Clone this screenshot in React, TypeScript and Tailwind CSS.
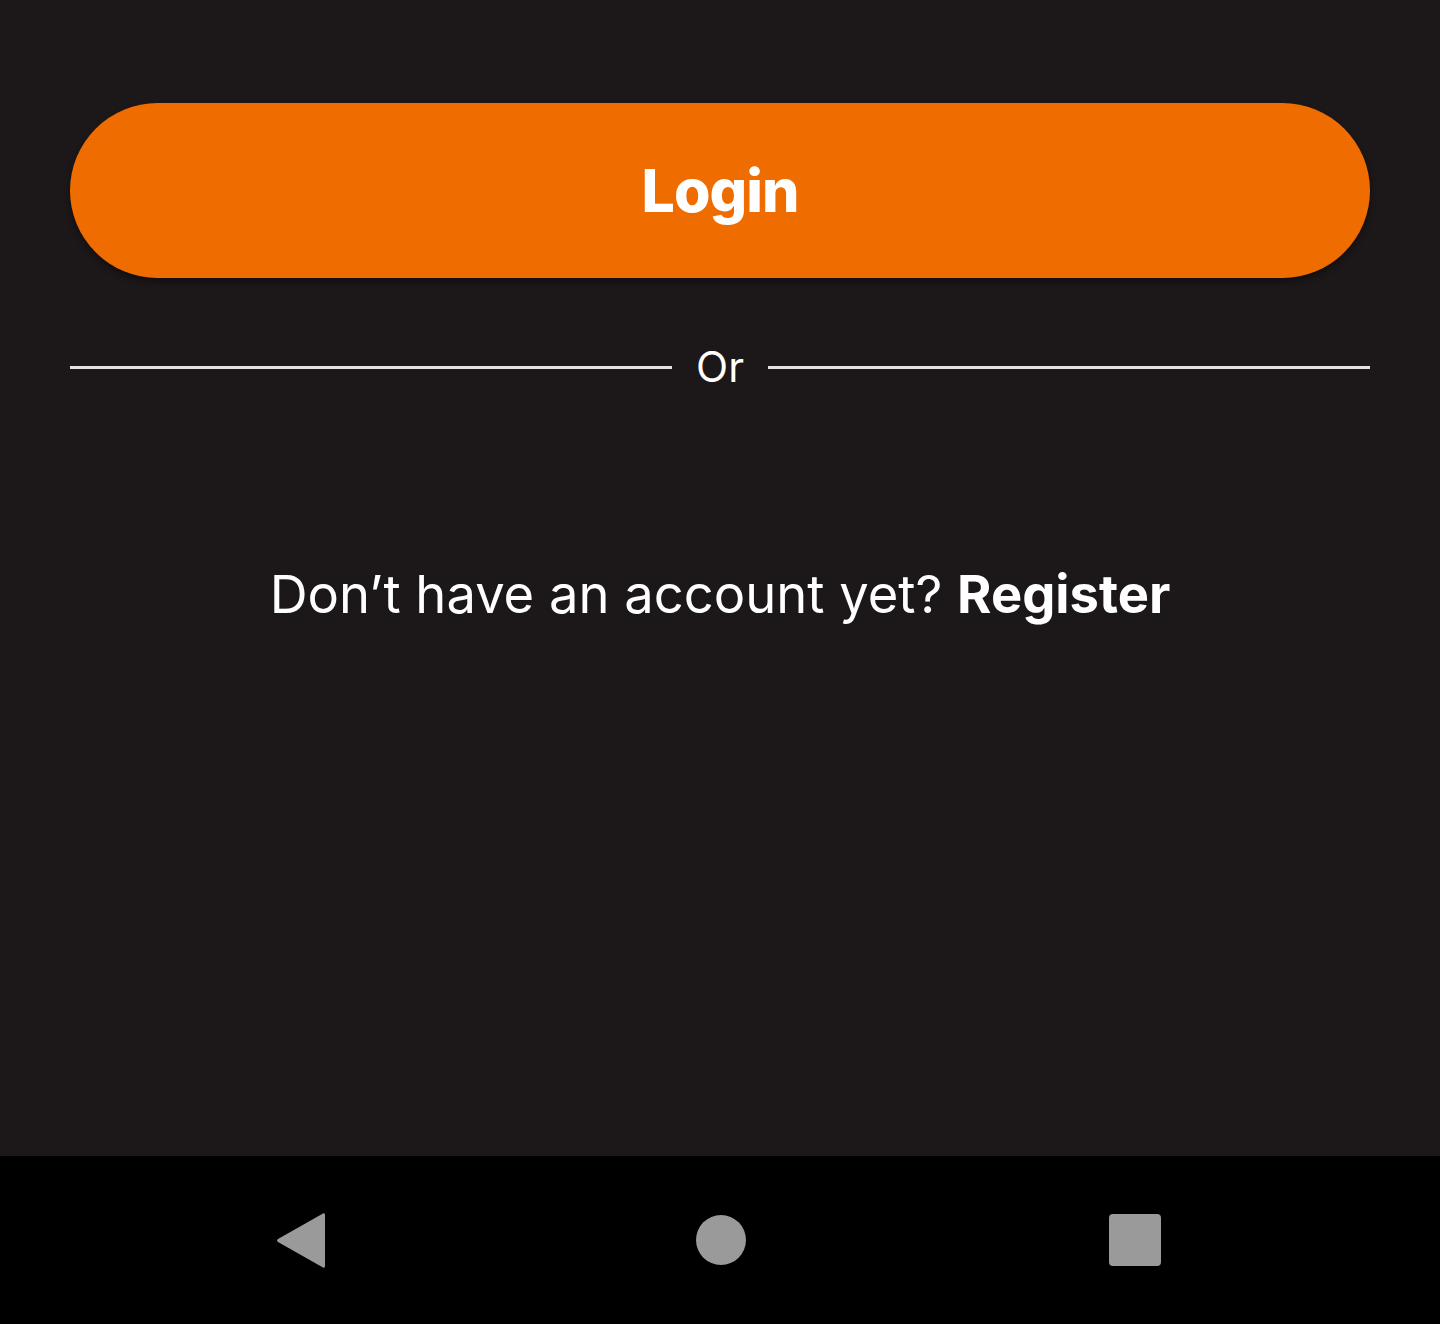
export default function App() {
  return (
    <div className="w-[1440px] h-[1324px] flex flex-col bg-black" style={{ fontFamily: "Inter, 'Noto Sans', sans-serif" }}>
      <div className="h-[1156px] bg-[#1c1718] flex flex-col px-[70px] pt-[103px]">
        <button className="h-[175px] w-full rounded-full bg-[#ef6c00] shadow-[0_4px_6px_rgba(0,0,0,0.35)] flex items-center justify-center">
          <span className="text-white font-extrabold text-[59px] tracking-[-1px] leading-none">Login</span>
        </button>
        <div className="mt-[64px] h-[50px] flex items-center">
          <div className="flex-1 h-[3px] bg-[#e6e2e2]"></div>
          <span className="w-[96px] text-center text-white text-[42px] leading-none">Or</span>
          <div className="flex-1 h-[3px] bg-[#e6e2e2]"></div>
        </div>
        <div className="mt-[176px] flex justify-center text-white text-[52.5px] leading-none">
          <span>Don’t have an account yet?&nbsp;</span>
          <span className="font-bold">Register</span>
        </div>
      </div>
      <div className="h-[168px] bg-black flex items-center">
        <div className="flex-1 flex items-center justify-between pl-[276px] pr-[279px]">
          <svg width="50" height="57" viewBox="0 0 50 57">
            <path d="M47 1.5 Q49 0.5 49 3 L49 54 Q49 56.5 47 55.5 L2 30 Q0 28.5 2 27 Z" fill="#9a9a9a" />
          </svg>
          <div className="ml-[6px] w-[50px] h-[50px] rounded-full bg-[#9a9a9a]"></div>
          <div className="w-[52px] h-[52px] rounded-[4px] bg-[#9a9a9a]"></div>
        </div>
      </div>
    </div>
  );
}
